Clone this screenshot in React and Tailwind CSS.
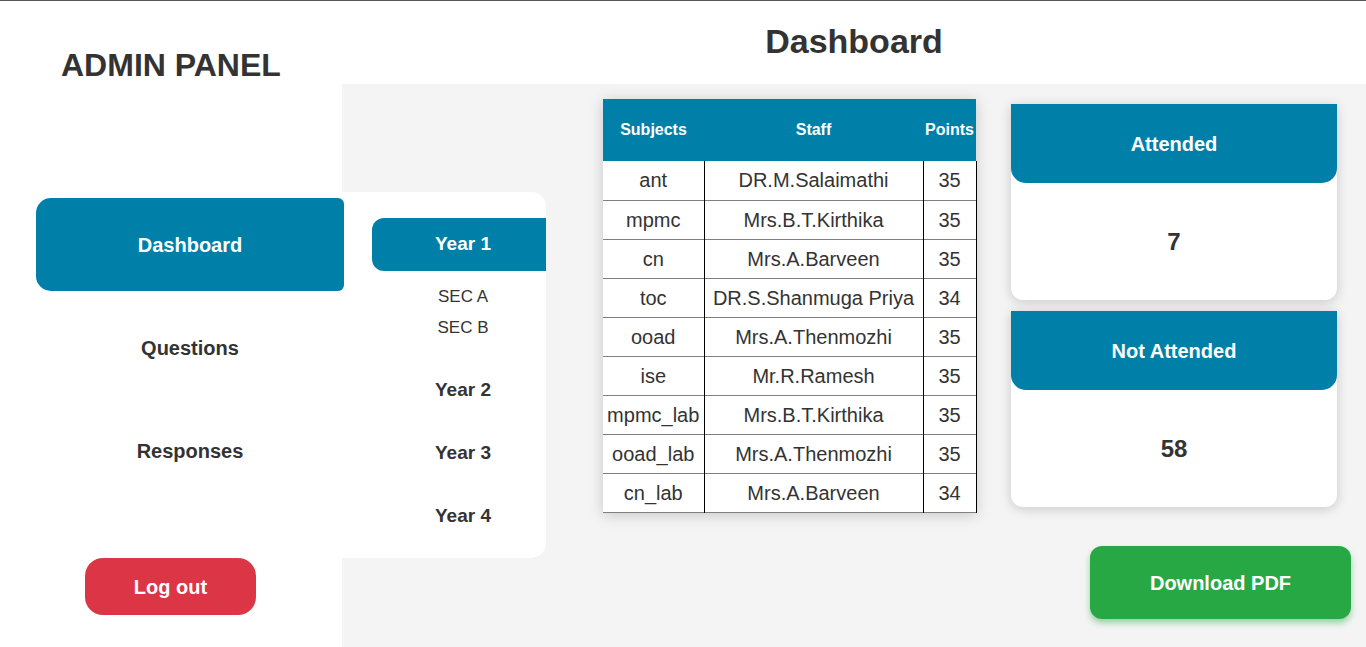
import React from "react";

const rows = [
  ["ant", "DR.M.Salaimathi", 35],
  ["mpmc", "Mrs.B.T.Kirthika", 35],
  ["cn", "Mrs.A.Barveen", 35],
  ["toc", "DR.S.Shanmuga Priya", 34],
  ["ooad", "Mrs.A.Thenmozhi", 35],
  ["ise", "Mr.R.Ramesh", 35],
  ["mpmc_lab", "Mrs.B.T.Kirthika", 35],
  ["ooad_lab", "Mrs.A.Thenmozhi", 35],
  ["cn_lab", "Mrs.A.Barveen", 34],
];

function StatCard({ title, value }) {
  return (
    <div className="w-[326px] bg-white rounded-b-[12px] shadow-[0_2px_12px_rgba(0,0,0,0.18)]">
      <div className="h-[79px] bg-[#007fa8] rounded-b-[15px] flex items-center justify-center text-white font-bold text-[20px]">
        {title}
      </div>
      <div className="h-[117px] flex items-center justify-center text-[#333] font-bold text-[24px]">
        {value}
      </div>
    </div>
  );
}

export default function App() {
  return (
    <div
      className="w-[1366px] h-[647px] flex border-t border-[#555] bg-white text-[#333] overflow-hidden"
      style={{ fontFamily: '"Liberation Sans", Arial, sans-serif' }}
    >
      {/* sidebar */}
      <aside className="w-[342px] shrink-0 flex flex-col relative z-10">
        <h1 className="mt-[46px] ml-[61px] text-[32px] font-bold leading-[37px]">ADMIN PANEL</h1>
        <nav className="mt-[114px] flex flex-col gap-[10px]">
          <div className="ml-[36px] w-[308px] h-[93px] bg-[#007fa8] rounded-l-[15px] rounded-r-[6px] flex items-center justify-center text-white font-bold text-[20px]">
            Dashboard
          </div>
          <div className="ml-[36px] w-[308px] h-[93px] flex items-center justify-center font-bold text-[20px]">
            Questions
          </div>
          <div className="ml-[36px] w-[308px] h-[93px] flex items-center justify-center font-bold text-[20px]">
            Responses
          </div>
        </nav>
        <button className="mt-[61px] ml-[85px] w-[171px] h-[57px] rounded-[18px] bg-[#dc3545] text-white font-bold text-[20px]">
          Log out
        </button>
      </aside>

      {/* main */}
      <main className="flex-1 flex flex-col">
        <header className="h-[83px] flex items-center justify-center">
          <h2 className="text-[34px] font-bold -mt-[2px]">Dashboard</h2>
        </header>
        <section className="flex-1 bg-[#f4f4f4] flex items-start">
          {/* year panel */}
          <div className="mt-[108px] w-[204px] h-[366px] bg-white rounded-r-[15px] overflow-hidden pl-[30px]">
            <div className="w-[182px] flex flex-col items-center">
              <div className="mt-[26px] w-full h-[53px] bg-[#007fa8] rounded-l-[12px] flex items-center justify-center text-white font-bold text-[19px]">
                Year 1
              </div>
              <div className="mt-[10px] h-[31px] flex items-center text-[17px]">SEC A</div>
              <div className="h-[31px] flex items-center text-[17px]">SEC B</div>
              <div className="mt-[16px] h-[63px] flex items-center font-bold text-[19px]">Year 2</div>
              <div className="h-[63px] flex items-center font-bold text-[19px]">Year 3</div>
              <div className="h-[63px] flex items-center font-bold text-[19px]">Year 4</div>
            </div>
          </div>

          {/* table */}
          <div className="ml-[57px] mt-[15px] w-[373px] bg-white shadow-[0_2px_14px_rgba(0,0,0,0.18)]">
            <table className="w-full border-collapse table-fixed">
              <thead>
                <tr className="h-[62px] bg-[#007fa8] text-white text-[16px] font-bold">
                  <th className="w-[101px]">Subjects</th>
                  <th className="w-[219px]">Staff</th>
                  <th className="w-[53px]">Points</th>
                </tr>
              </thead>
              <tbody className="text-[20px]">
                {rows.map(([sub, staff, pts]) => (
                  <tr key={sub} className="h-[39px] border-b border-[#808080]">
                    <td className="text-center border-r border-black">{sub}</td>
                    <td className="text-center border-r border-black whitespace-nowrap">{staff}</td>
                    <td className="text-center border-r border-black">{pts}</td>
                  </tr>
                ))}
              </tbody>
            </table>
          </div>

          {/* stats */}
          <div className="ml-[35px] mt-[20px] w-[340px] flex flex-col">
            <StatCard title="Attended" value="7" />
            <div className="mt-[11px]">
              <StatCard title="Not Attended" value="58" />
            </div>
            <button className="mt-[39px] self-end w-[261px] h-[73px] rounded-[12px] bg-[#28a745] text-white font-bold text-[20px] shadow-[0_4px_6px_rgba(40,167,69,0.45)]">
              Download PDF
            </button>
          </div>
        </section>
      </main>
    </div>
  );
}
